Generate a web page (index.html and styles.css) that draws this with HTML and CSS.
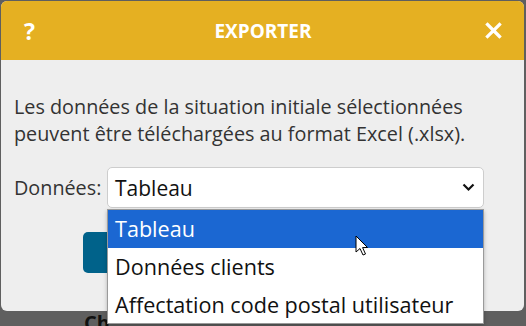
FILE: index.html
```html
<!DOCTYPE html>
<html lang="fr">
<head>
<meta charset="utf-8">
<link rel="stylesheet" href="styles.css">
</head>
<body>
<div class="page">
  <div class="behind">Ch</div>
</div>
<div class="dialog">
  <div class="head">
    <span class="help">?</span>
    <span class="title">EXPORTER</span>
    <svg class="close" width="17" height="17" viewBox="0 0 17 17"><path d="M2.5 2.5L14.5 14.5M14.5 2.5L2.5 14.5" stroke="#fff" stroke-width="3.2" stroke-linecap="square"/></svg>
  </div>
  <div class="body">
    <p class="intro">Les données de la situation initiale sélectionnées peuvent être téléchargées au format Excel (.xlsx).</p>
    <div class="row">
      <span class="label">Données:</span>
      <div class="select">
        <span>Tableau</span>
        <svg class="chev" width="13" height="9" viewBox="0 0 13 9"><path d="M1.5 1.5L6.5 6.5L11.5 1.5" fill="none" stroke="#111" stroke-width="2.2"/></svg>
        <ul class="list">
          <li class="opt active">Tableau</li>
          <li class="opt">Données clients</li>
          <li class="opt">Affectation code postal utilisateur</li>
        </ul>
      </div>
    </div>
    <div class="actions"><button class="btn" aria-label="Exporter"></button></div>
  </div>
</div>
<svg class="cursor" width="14" height="22" viewBox="0 0 14 22"><path d="M1 1L1 17L5 13.5L8 20L10.5 19L7.6 12.6L12.5 12.5Z" fill="#fff" stroke="#000" stroke-width="1" stroke-linejoin="round"/></svg>
</body>
</html>
```
FILE: styles.css
```css
html, body { margin: 0; padding: 0; }
body {
  width: 526px;
  height: 326px;
  background: #5f5f5f;
  font-family: "Open Sans", sans-serif;
  position: relative;
  overflow: hidden;
}
.page {
  position: absolute;
  left: 0; top: 0; right: 0; bottom: 0;
}
.behind {
  position: absolute;
  left: 84px;
  top: 313px;
  font-weight: 700;
  font-size: 20px;
  line-height: 20px;
  color: #111;
}
.dialog {
  position: absolute;
  left: 1px;
  top: 1px;
  width: 523px;
  height: 310px;
  background: #eeeeee;
  border-radius: 6px;
}
.head {
  height: 59px;
  background: #e5b022;
  border-radius: 6px 6px 0 0;
  display: flex;
  align-items: center;
  justify-content: space-between;
  padding: 0 22px 0 23px;
  color: #fff;
  font-weight: 700;
}
.help { font-size: 23px; width: 17px; }
.title { font-size: 19px; }
.close { display: block; }
.body { padding: 33px 13px 0 13px; }
.intro {
  margin: 0;
  font-size: 19.8px;
  line-height: 27px;
  color: #333;
}
.row {
  margin-top: 20px;
  display: flex;
  align-items: center;
}
.label { font-size: 19.8px; color: #333; width: 93px; flex: none; }
.select {
  position: relative;
  box-sizing: border-box;
  height: 41px;
  width: 377px;
  background: #fff;
  border: 1px solid #cdcdcd;
  border-radius: 5px;
  display: flex;
  align-items: center;
  justify-content: space-between;
  padding: 0 8px 0 7px;
  font-size: 21px;
  color: #111;
}
.chev { display: block; }
.list {
  position: absolute;
  left: -1px;
  top: 41px;
  width: 377px;
  margin: 0;
  padding: 0;
  list-style: none;
  background: #fff;
  border: 1px solid #9a9a9a;
  box-sizing: border-box;
  box-shadow: 0 2px 4px rgba(0,0,0,0.25);
  z-index: 2;
}
.opt {
  height: 38px;
  line-height: 38px;
  padding-left: 7px;
  font-size: 21.6px;
  color: #111;
  white-space: nowrap;
}
.opt:last-child { height: 37px; line-height: 37px; }
.opt.active { background: #1b67d2; color: #fff; }
.actions {
  display: flex;
  justify-content: center;
  margin-top: 24px;
}
.btn {
  width: 360px;
  height: 41px;
  border: none;
  border-radius: 5px;
  background: #00628a;
}
.cursor {
  position: absolute;
  left: 355px;
  top: 235px;
  z-index: 5;
}
```
